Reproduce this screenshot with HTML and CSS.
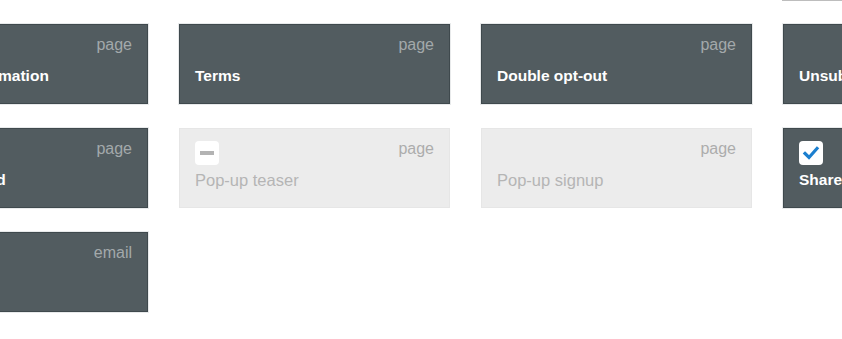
FILE: index.html
```html
<!DOCTYPE html>
<html lang="en">
<head>
<meta charset="utf-8">
<title>Pages</title>
<link rel="stylesheet" href="styles.css">
</head>
<body>
<div class="grid">
  <div class="card card--outline col-4"></div>

  <div class="card card--dark">
    <div class="card__head"><span class="card__type">page</span></div>
    <div class="card__title">Sign-up confirmation</div>
  </div>
  <div class="card card--dark">
    <div class="card__head"><span class="card__type">page</span></div>
    <div class="card__title">Terms</div>
  </div>
  <div class="card card--dark">
    <div class="card__head"><span class="card__type">page</span></div>
    <div class="card__title">Double opt-out</div>
  </div>
  <div class="card card--dark">
    <div class="card__head"><span class="card__type">page</span></div>
    <div class="card__title">Unsubscribe</div>
  </div>

  <div class="card card--dark">
    <div class="card__head"><span class="check check--on"><svg viewBox="0 0 24 24" width="24" height="24"><path d="M6 12.5l4 4 8-9" fill="none" stroke="#1b7fcf" stroke-width="3.2" stroke-linecap="square"/></svg></span><span class="card__type">page</span></div>
    <div class="card__title">Profile updated</div>
  </div>
  <div class="card card--muted">
    <div class="card__head"><span class="check"><span class="check__dash"></span></span><span class="card__type">page</span></div>
    <div class="card__title">Pop-up teaser</div>
  </div>
  <div class="card card--muted">
    <div class="card__head"><span class="card__type">page</span></div>
    <div class="card__title">Pop-up signup</div>
  </div>
  <div class="card card--dark">
    <div class="card__head"><span class="check check--on"><svg viewBox="0 0 24 24" width="24" height="24"><path d="M6 12.5l4 4 8-9" fill="none" stroke="#1b7fcf" stroke-width="3.2" stroke-linecap="square"/></svg></span><span class="card__type">page</span></div>
    <div class="card__title">Share</div>
  </div>

  <div class="card card--dark">
    <div class="card__head"><span class="card__type">email</span></div>
    <div class="card__title">Welcome</div>
  </div>
</div>
</body>
</html>
```

FILE: styles.css
```css
html, body {
  margin: 0;
  padding: 0;
  background: #ffffff;
  overflow: hidden;
  width: 842px;
  height: 339px;
}

.grid {
  display: grid;
  grid-template-columns: repeat(4, 271px);
  grid-auto-rows: 80px;
  column-gap: 31px;
  row-gap: 24px;
  margin-top: -80px;
  margin-left: -123px;
  font-family: "Liberation Sans", Arial, Helvetica, sans-serif;
}

.col-4 {
  grid-column: 4;
}

.card {
  box-sizing: border-box;
  padding: 11px 15px 0 15px;
  display: flex;
  flex-direction: column;
  white-space: nowrap;
}

.card--outline {
  height: 81px;
  margin-left: -1px;
  background: #ffffff;
  border: 1px solid #bdbdbd;
}

.card--dark {
  background: #525c60;
  border: 1px solid #3f494d;
  box-shadow: 0 0 0 1px rgba(190, 196, 198, 0.35);
}

.card--muted {
  background: #ececec;
  border: 1px solid #e6e6e6;
}

.card__head {
  display: flex;
  justify-content: flex-end;
  align-items: flex-start;
  height: 25px;
}

.check {
  box-sizing: border-box;
  width: 24px;
  height: 24px;
  margin-top: 1px;
  margin-right: auto;
  background: #ffffff;
  border-radius: 4px;
  display: flex;
  align-items: center;
  justify-content: center;
}

.check svg {
  display: block;
}

.check__dash {
  width: 14px;
  height: 4px;
  background: #b3b3b3;
}

.card__type {
  font-size: 16px;
  line-height: 18px;
  color: #a3a9ab;
}

.card--muted .card__type {
  color: #acacac;
}

.card__title {
  margin-top: 6px;
  font-size: 15.5px;
  line-height: 18px;
  font-weight: bold;
  color: #ffffff;
}

.card--muted .card__title {
  font-size: 16.5px;
  font-weight: normal;
  color: #b5b5b5;
}
```
